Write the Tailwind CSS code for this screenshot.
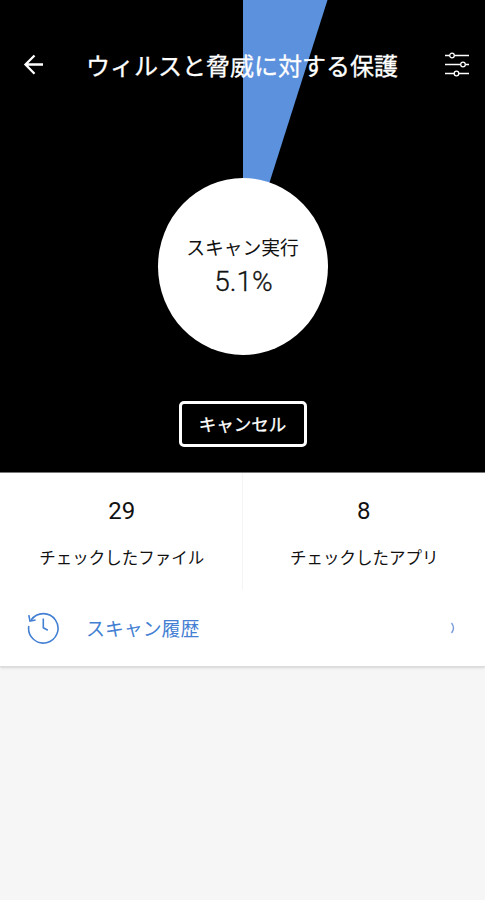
<!DOCTYPE html>
<html lang="ja">
<head>
    <meta charset="UTF-8">
    <meta name="viewport" content="width=device-width, initial-scale=1.0">
    <title>ウィルスと脅威に対する保護</title>
    <script src="https://cdn.jsdelivr.net/npm/@tailwindcss/browser@4"></script>
</head>
<body class="bg-[#f6f6f6] min-h-screen overflow-hidden font-[Roboto,'Noto_Sans_CJK_JP',sans-serif] text-[#111]">

    <!-- Scan progress -->
    <section class="relative flex flex-col items-center h-[473px] bg-black border-b border-[#777]">
        <svg class="absolute inset-0 w-full h-[266px]" viewBox="0 0 485 266" preserveAspectRatio="none">
            <path d="M243 266V0H327.5Z" fill="#5b91dd"/>
        </svg>

        <header class="relative flex items-center w-full h-[130px] pl-[23px] pr-[15px] text-white">
            <svg class="w-[21px] h-[22px]" viewBox="0 0 21 22" fill="none" stroke="currentColor" stroke-width="2.3">
                <path d="M20 10.5H2.5M11.5 1.5L2.5 10.5L11.5 19.8"/>
            </svg>
            <h1 class="ml-[42px] pt-[3px] text-[24px] leading-[30px] [-webkit-text-stroke:0.3px_white] whitespace-nowrap">ウィルスと脅威に対する保護</h1>
            <svg class="ml-auto w-[26px] h-[26px]" viewBox="0 0 26 26" fill="none" stroke="currentColor" stroke-width="1.3">
                <path d="M1 3.5H5.5M10.5 3.5H25M1 12.5H16.5M21.5 12.5H25M1 21.5H10M15 21.5H25"/>
                <circle cx="8" cy="3.5" r="2.3"/>
                <circle cx="19" cy="12.5" r="2.3"/>
                <circle cx="12.5" cy="21.5" r="2.3"/>
            </svg>
        </header>

        <div class="relative flex flex-col items-center mt-[48px] w-[170px] h-[177px] pt-[57px] rounded-[50%] bg-white">
            <p class="text-[18.8px] leading-[28px] whitespace-nowrap">スキャン実行</p>
            <p class="mt-[2px] pl-[2px] text-[28px] leading-[34px] font-light [-webkit-text-stroke:0.3px_#111]">5.1%</p>
        </div>

        <button class="mt-[46px] w-[128px] h-[46px] pt-[2px] rounded-[5px] border-3 border-white text-white text-[17.5px] leading-[24px] [-webkit-text-stroke:0.3px_white]">キャンセル</button>
    </section>

    <!-- Counters and history -->
    <section class="h-[194px] bg-white border-b border-[#dcdcdc] shadow-sm">
        <div class="grid grid-cols-2 h-[117px] text-center">
            <div class="border-r border-[#f4f4f4]">
                <p class="mt-[23px] pl-[2px] text-[24px] leading-[30px]">29</p>
                <p class="mt-[21px] pl-[2px] text-[16.5px] leading-[24px]">チェックしたファイル</p>
            </div>
            <div>
                <p class="mt-[23px] text-[24px] leading-[30px]">8</p>
                <p class="mt-[21px] pl-[1px] text-[16.5px] leading-[24px]">チェックしたアプリ</p>
            </div>
        </div>
        <a class="flex items-center h-[76px] pl-[27px] pr-[29px] text-[#4380d3]">
            <svg class="w-[33px] h-[33px]" viewBox="0 0 33 33" fill="none" stroke="currentColor" stroke-width="1.6">
                <path d="M4.2 8A14.7 14.7 0 1 1 1.8 14"/>
                <path d="M1.8 3.2L3 9L8.6 8M16.3 6.5V15.8L20.8 18.2"/>
            </svg>
            <span class="ml-[26px] pt-[3px] text-[18.9px] leading-[28px]">スキャン履歴</span>
            <svg class="ml-auto w-[6px] h-[12px] text-[#7c9edb]" viewBox="0 0 6 12" fill="none" stroke="currentColor" stroke-width="1.4">
                <path d="M1.5 1Q5.5 6 1.5 11"/>
            </svg>
        </a>
    </section>

</body>
</html>
